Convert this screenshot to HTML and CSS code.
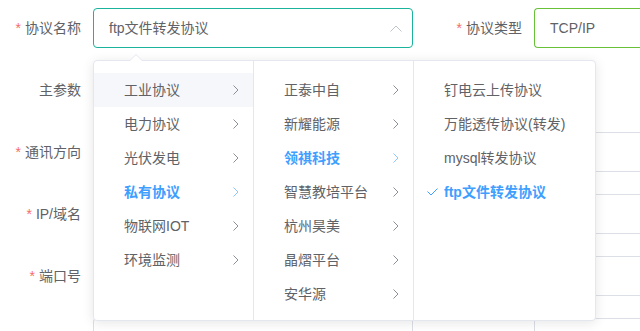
FILE: index.html
```html
<!DOCTYPE html>
<html lang="zh-CN">
<head>
<meta charset="utf-8">
<link rel="stylesheet" href="styles.css">
</head>
<body>
<div class="form">
  <div class="row">
    <label class="label"><span class="req">*</span>协议名称</label>
    <div class="select">
      <div class="input focus">ftp文件转发协议
        <svg class="caret" width="12" height="7" viewBox="0 0 12 7"><polyline points="0.5,6.5 6,1 11.5,6.5" fill="none" stroke="#c0c4cc" stroke-width="1"/></svg>
      </div>
      <div class="popper">
        <div class="arrow"></div>
        <div class="menu m1">
          <ul class="list">
            <li class="item hover">工业协议<svg class="chev" width="6" height="10" viewBox="0 0 6 10"><polyline points="0.5,0.5 5,5 0.5,9.5" fill="none" stroke="currentColor"/></svg></li>
            <li class="item">电力协议<svg class="chev" width="6" height="10" viewBox="0 0 6 10"><polyline points="0.5,0.5 5,5 0.5,9.5" fill="none" stroke="currentColor"/></svg></li>
            <li class="item">光伏发电<svg class="chev" width="6" height="10" viewBox="0 0 6 10"><polyline points="0.5,0.5 5,5 0.5,9.5" fill="none" stroke="currentColor"/></svg></li>
            <li class="item active">私有协议<svg class="chev" width="6" height="10" viewBox="0 0 6 10"><polyline points="0.5,0.5 5,5 0.5,9.5" fill="none" stroke="currentColor"/></svg></li>
            <li class="item">物联网IOT<svg class="chev" width="6" height="10" viewBox="0 0 6 10"><polyline points="0.5,0.5 5,5 0.5,9.5" fill="none" stroke="currentColor"/></svg></li>
            <li class="item">环境监测<svg class="chev" width="6" height="10" viewBox="0 0 6 10"><polyline points="0.5,0.5 5,5 0.5,9.5" fill="none" stroke="currentColor"/></svg></li>
          </ul>
        </div>
        <div class="menu m2">
          <ul class="list">
            <li class="item">正泰中自<svg class="chev" width="6" height="10" viewBox="0 0 6 10"><polyline points="0.5,0.5 5,5 0.5,9.5" fill="none" stroke="currentColor"/></svg></li>
            <li class="item">新耀能源<svg class="chev" width="6" height="10" viewBox="0 0 6 10"><polyline points="0.5,0.5 5,5 0.5,9.5" fill="none" stroke="currentColor"/></svg></li>
            <li class="item active">领祺科技<svg class="chev" width="6" height="10" viewBox="0 0 6 10"><polyline points="0.5,0.5 5,5 0.5,9.5" fill="none" stroke="currentColor"/></svg></li>
            <li class="item">智慧教培平台<svg class="chev" width="6" height="10" viewBox="0 0 6 10"><polyline points="0.5,0.5 5,5 0.5,9.5" fill="none" stroke="currentColor"/></svg></li>
            <li class="item">杭州昊美<svg class="chev" width="6" height="10" viewBox="0 0 6 10"><polyline points="0.5,0.5 5,5 0.5,9.5" fill="none" stroke="currentColor"/></svg></li>
            <li class="item">晶熠平台<svg class="chev" width="6" height="10" viewBox="0 0 6 10"><polyline points="0.5,0.5 5,5 0.5,9.5" fill="none" stroke="currentColor"/></svg></li>
            <li class="item">安华源<svg class="chev" width="6" height="10" viewBox="0 0 6 10"><polyline points="0.5,0.5 5,5 0.5,9.5" fill="none" stroke="currentColor"/></svg></li>
          </ul>
        </div>
        <div class="menu m3">
          <ul class="list">
            <li class="item">钉电云上传协议</li>
            <li class="item">万能透传协议(转发)</li>
            <li class="item">mysql转发协议</li>
            <li class="item active"><svg class="check" width="11" height="8" viewBox="0 0 11 8"><polyline points="0.5,3.5 4,7 10.5,0.5" fill="none" stroke="currentColor" stroke-width="1"/></svg>ftp文件转发协议</li>
          </ul>
        </div>
      </div>
    </div>
    <label class="label label2"><span class="req">*</span>协议类型</label>
    <div class="input ok open">TCP/IP</div>
  </div>
  <div class="row">
    <label class="label">主参数</label>
  </div>
  <div class="row">
    <label class="label"><span class="req">*</span>通讯方向</label>
    <div class="input open"></div>
  </div>
  <div class="row">
    <label class="label"><span class="req">*</span>IP/域名</label>
    <div class="input open"></div>
  </div>
  <div class="row">
    <label class="label"><span class="req">*</span>端口号</label>
    <div class="input open"></div>
  </div>
  <div class="row cut">
    <label class="label"></label>
    <div class="input half"></div>
    <label class="label label2"></label>
    <div class="input open"></div>
  </div>
</div>
</body>
</html>
```

FILE: styles.css
```css
html, body {
  margin: 0;
  padding: 0;
  background: #fff;
  overflow: hidden;
}
body {
  width: 640px;
  height: 331px;
  font-family: "Liberation Sans", "Noto Sans CJK SC", sans-serif;
  font-size: 14px;
  color: #606266;
}
.form {
  width: 640px;
  height: 331px;
  box-sizing: border-box;
  padding-top: 8px;
  display: flex;
  flex-direction: column;
  gap: 22px;
}
.row {
  display: flex;
  align-items: center;
  height: 40px;
  flex: none;
}
.row.cut {
  height: 13px;
  align-items: flex-start;
}
.label {
  width: 93px;
  box-sizing: border-box;
  padding-right: 12px;
  text-align: right;
  line-height: 40px;
  flex: none;
}
.label2 {
  width: 121px;
}
.req {
  color: #f56c6c;
  margin-right: 4px;
}
.select {
  position: relative;
  width: 320px;
  flex: none;
}
.input {
  box-sizing: border-box;
  height: 40px;
  line-height: 38px;
  border: 1px solid #dcdfe6;
  border-radius: 4px;
  padding: 0 15px;
  background: #fff;
  color: #606266;
  position: relative;
}
.input.focus {
  border-color: #1ab39c;
  width: 320px;
}
.caret {
  position: absolute;
  right: 10px;
  top: 16px;
}
.input.ok {
  border-color: #67c23a;
}
.input.open {
  flex: 1;
  border-right: none;
  border-radius: 4px 0 0 4px;
}
.row.cut .input {
  height: 13px;
  border-bottom: none;
  border-radius: 4px 4px 0 0;
}
.row.cut .input.open {
  border-radius: 4px 0 0 0;
}
.half {
  width: 320px;
  flex: none;
}
.popper {
  position: absolute;
  left: 0;
  top: 52px;
  display: flex;
  background: #fff;
  border: 1px solid #e4e7ed;
  border-radius: 4px;
  box-shadow: 0 2px 12px 0 rgba(0, 0, 0, 0.1);
  z-index: 10;
}
.arrow {
  position: absolute;
  left: 36px;
  top: -7px;
  width: 0;
  height: 0;
  border-left: 6px solid transparent;
  border-right: 6px solid transparent;
  border-bottom: 6px solid #e4e7ed;
}
.arrow::after {
  content: "";
  position: absolute;
  left: -6px;
  top: 1px;
  border-left: 6px solid transparent;
  border-right: 6px solid transparent;
  border-bottom: 6px solid #fff;
}
.menu {
  height: 259px;
  box-sizing: border-box;
  border-right: 1px solid #e4e7ed;
}
.m1, .m2 {
  width: 160px;
}
.m3 {
  width: 181px;
  border-right: none;
}
.list {
  list-style: none;
  margin: 0;
  padding: 12px 0 0;
}
.item {
  position: relative;
  display: flex;
  align-items: center;
  height: 34px;
  line-height: 34px;
  padding: 0 14px 0 30px;
  white-space: nowrap;
  color: #606266;
}
.item.hover {
  background: #f5f7fa;
}
.item.active {
  color: #409eff;
  font-weight: bold;
}
.chev {
  margin-left: auto;
  color: #8a8f99;
}
.item.active .chev {
  color: #8cc5ff;
}
.check {
  position: absolute;
  left: 13px;
  top: 13px;
  color: #409eff;
}
```
